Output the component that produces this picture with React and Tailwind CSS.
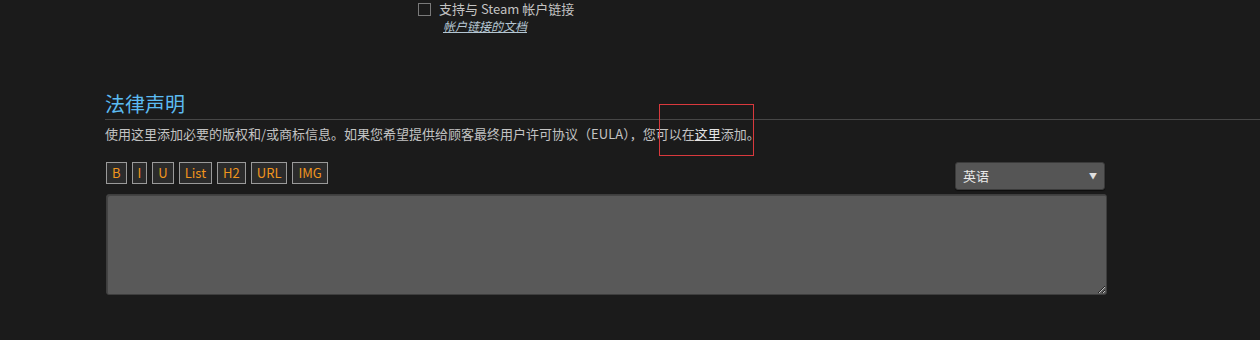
import React, { useState } from 'react';

const tools = ['B', 'I', 'U', 'List', 'H2', 'URL', 'IMG'];

const font = { fontFamily: '"Noto Sans CJK SC", "Liberation Sans", sans-serif' };

export default function App() {
  const [lang, setLang] = useState('英语');

  return (
    <div className="relative w-[1260px] h-[340px] bg-[#1b1b1b] overflow-hidden text-[13px] text-[#c3c3c3]" style={font}>
      {/* steam linking option */}
      <div className="pl-[418px] pt-[1px]">
        <label className="flex items-center h-[16px] leading-[16px]">
          <span className="w-[13px] h-[13px] border border-[#7a7a7a] bg-transparent mr-[8px]" />
          <span>支持与 Steam 帐户链接</span>
        </label>
        <a className="block ml-[25px] mt-[2px] text-[12px] leading-[14px] italic underline text-[#b4c6d2]">
          帐户链接的文档
        </a>
      </div>

      <div className="pl-[105px] mt-[58px]">
        <div className="border-b border-[#474747] pb-[2px]">
          <h2 className="text-[20px] leading-[26px] text-[#5cbbf2]">法律声明</h2>
        </div>
        <p className="mt-[4px] leading-[20px]">
          使用这里添加必要的版权和/或商标信息。如果您希望提供给顾客最终用户许可协议（EULA），您可以在<a className="underline text-[#e6e6e6]">这里</a>添加。
        </p>

        <div className="w-[1001px] mt-[18px] flex items-start justify-between">
          <div className="flex gap-[5px] pl-[1px]">
            {tools.map(t => (
              <button
                key={t}
                className="h-[22px] px-[5px] min-w-[15px] border border-[#9a9a9a] bg-[#2b2b2b] text-[#f0951d] text-[13px] leading-[20px]"
              >
                {t}
              </button>
            ))}
          </div>
          <div className="relative w-[150px] h-[28px] mr-[1px] rounded-[3px] bg-[#555555] border border-[#3a3a3a] shadow-[0_1px_1px_rgba(0,0,0,0.5)]">
            <span className="absolute left-[7px] top-[4px] text-[13px] leading-[18px] text-[#e8e8e8]">{lang}</span>
            <span className="absolute right-[7px] top-[6px] text-[8px] leading-[14px] text-[#e0e0e0]">▼</span>
          </div>
        </div>

        <textarea
          className="block w-[1001px] h-[101px] mt-[4px] ml-[1px] rounded-[3px] bg-[#595959] border border-[#3e3e3e] shadow-[inset_1px_1px_0_#444] text-[#e0e0e0] outline-none"
          defaultValue=""
        />
      </div>

      {/* highlight box */}
      <div className="absolute left-[659px] top-[104px] w-[95px] h-[52px] border border-[#d9393d] pointer-events-none" />
    </div>
  );
}
